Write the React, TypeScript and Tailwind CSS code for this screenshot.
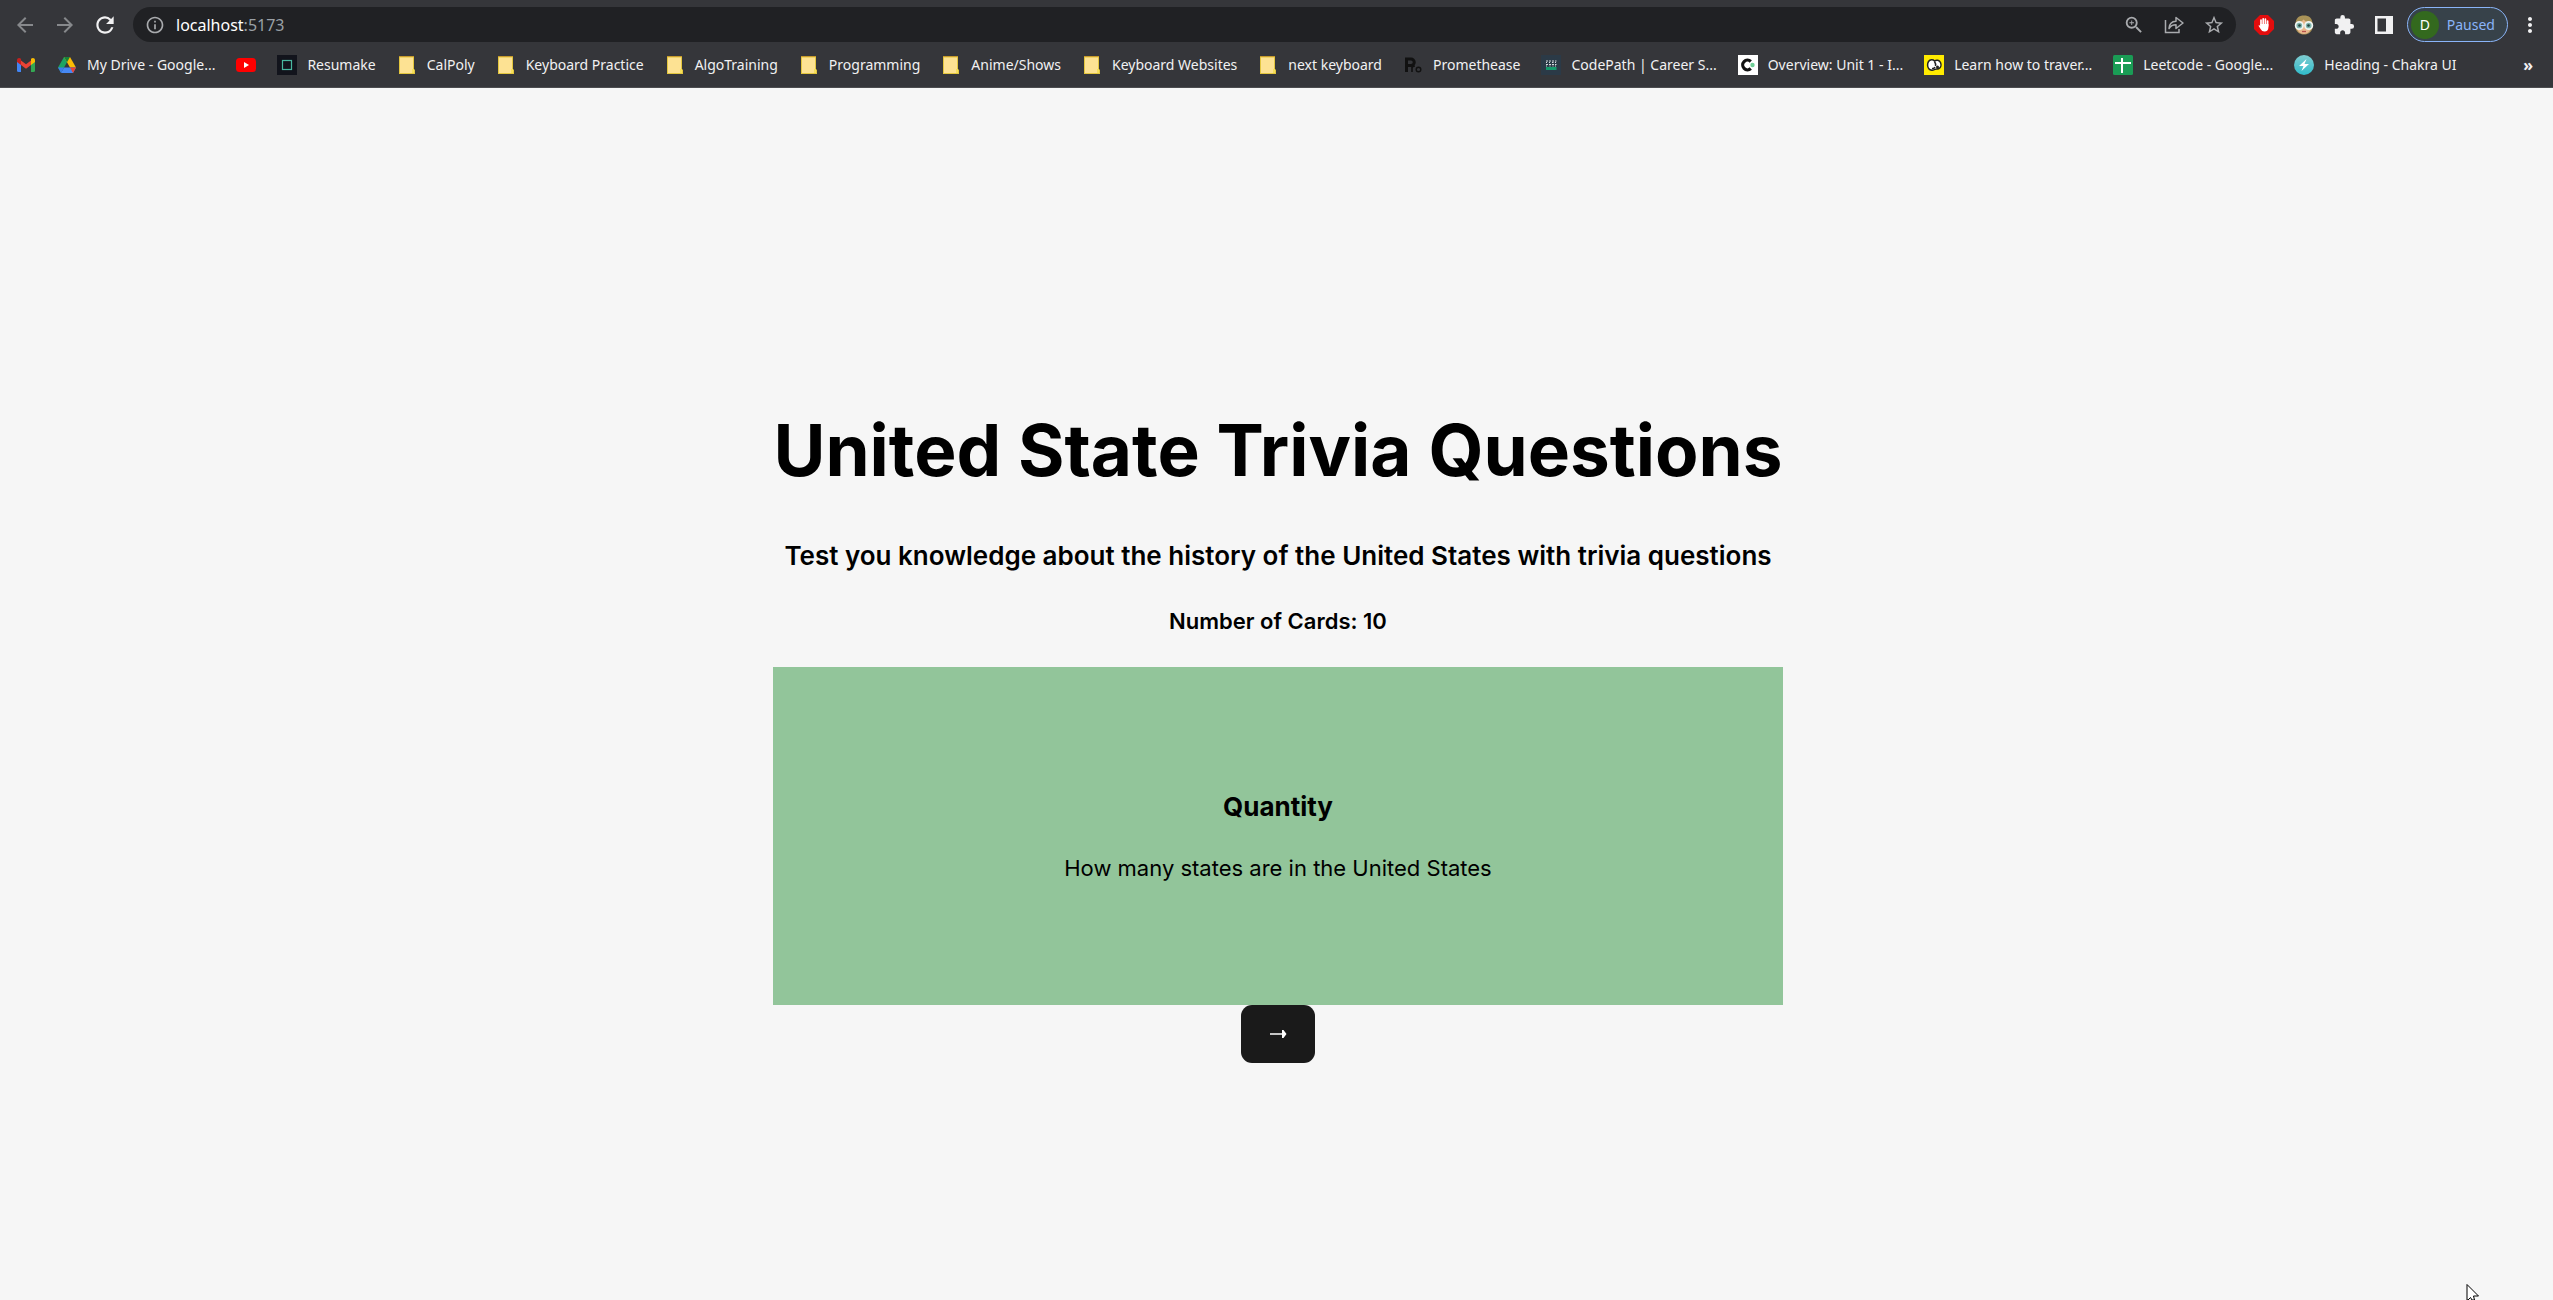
import React from 'react';
import {
  MdArrowBack,
  MdArrowForward,
  MdExtension,
  MdMoreVert,
  MdOutlineInfo,
  MdRefresh,
  MdStarBorder,
  MdZoomIn,
} from 'react-icons/md';

function GmailIcon() {
  return (
    <svg viewBox="0 0 20 20" className="size-5">
      <path d="M1 5v10.500a1.500 1.500 0 0 0 1.500 1.500H5V8z" fill="#4285f4" />
      <path d="M19 5v10.500a1.500 1.500 0 0 1-1.500 1.500H15V8z" fill="#34a853" />
      <path d="M5 5.500l5 3.800 5-3.800V10l-5 3.800L5 10z" fill="#ea4335" />
      <path d="M1 5.200C1 3.200 3.200 2.500 4.600 3.600L5 4v6L1 7z" fill="#c5221f" />
      <path d="M19 5.200c0-2-2.200-2.700-3.600-1.600L15 4v6l4-3z" fill="#fbbc04" />
    </svg>
  );
}

function DriveIcon() {
  return (
    <svg viewBox="0 0 20 20" className="size-5">
      <path d="M7 2h6L7 12.500 4 17.500 1 12.500z" fill="#1da462" />
      <path d="M7 2h6l6 10.500h-6z" fill="#fbbc04" />
      <path d="M7 2h6l-3 5.200z" fill="#188038" />
      <path d="M7 12.500h12l-3 5.500H4z" fill="#4688f4" />
      <path d="M13 12.500h6l-3 5.500z" fill="#ea4335" />
      <path d="M1 12.500h6L4 18z" fill="#3b7ded" />
    </svg>
  );
}

function YouTubeIcon() {
  return (
    <svg viewBox="0 0 20 20" className="size-5">
      <rect x="0" y="3" width="20" height="14" rx="3.500" fill="#f00" />
      <path d="M8 7l5 3-5 3z" fill="#fff" />
    </svg>
  );
}

function ResumakeIcon() {
  return (
    <svg viewBox="0 0 20 20" className="size-5">
      <rect width="20" height="20" fill="#12141c" />
      <rect x="5.500" y="5.500" width="9" height="9" fill="none" stroke="#48b8a0" strokeWidth="1.200" />
    </svg>
  );
}

function FolderIcon() {
  return (
    <svg viewBox="0 0 20 20" className="size-5">
      <path d="M2 1.500h15v12.500l1 1v4H2z" fill="#e3c63e" />
      <path d="M3 2.500h13v15.500H3z" fill="#fde293" />
      <path d="M15 14h2v4h-2z" fill="#f6e05a" />
      <path d="M2 1h15v1H2z" fill="#c79a2c" />
    </svg>
  );
}

function PrometheaseIcon() {
  return (
    <svg viewBox="0 0 20 20" className="size-5" fill="none" stroke="#111">
      <path d="M3.500 17V4h4.500a3.200 3.200 0 0 1 0 6.500H3.500" strokeWidth="3" />
      <path d="M9 17v-6M9 13c.5-1.500 1.500-2 3-2" strokeWidth="1.600" />
      <circle cx="15.500" cy="14.500" r="2.300" strokeWidth="1.400" />
    </svg>
  );
}

function CodePathIcon() {
  return (
    <svg viewBox="0 0 20 20" className="size-5">
      <rect width="20" height="20" fill="#2b3a47" />
      <path d="M5 6h2M8 6h2M11 6h2M14 6h1.500M5 7.500h1M8 7.500h1M11 7.500h1.500M14 7.500h1M5 9.500h2M8 9.500h2M11 9.500h2M14 9.500h1.500M5 11h1M8.500 11h1M11.500 11h1M14 11h1" stroke="#d5dade" strokeWidth="1.100" />
      <path d="M5 13.500h10.500" stroke="#159a6c" strokeWidth="3" />
    </svg>
  );
}

function OverviewIcon() {
  return (
    <svg viewBox="0 0 20 20" className="size-5">
      <rect width="20" height="20" fill="#fff" />
      <path d="M12.800 6.500A4.800 4.800 0 1 0 12.800 13.500" fill="none" stroke="#111" strokeWidth="3.200" />
      <circle cx="14.500" cy="10" r="2.200" fill="#6fcf97" />
    </svg>
  );
}

function LearnIcon() {
  return (
    <svg viewBox="0 0 20 20" className="size-5">
      <rect width="20" height="20" fill="#ffeb00" />
      <path d="M4.500 6.500C6 4.500 9 4.300 10.500 6c2-1.600 5-.8 6 1.500s.4 5-1.500 6c-1.500.8-3 .3-4 .8-1.700 1.500-4.700 1.200-6.200-.6S3.200 8.500 4.500 6.500z" fill="#fff" stroke="#222" strokeWidth="1.500" />
      <path d="M10.500 6.500c1 1.500 1.500 2.500 1 4.500M8 13.500c1.500.3 2.500-.3 3-1.500" fill="none" stroke="#222" strokeWidth="1.500" />
      <circle cx="13.500" cy="12" r="1.500" fill="#222" />
    </svg>
  );
}

function SheetIcon() {
  return (
    <svg viewBox="0 0 20 20" className="size-5">
      <rect x="0" y="0" width="20" height="20" rx="1.500" fill="#1a9c55" />
      <path d="M9 3v15M2 8h16" stroke="#fff" strokeWidth="2" />
    </svg>
  );
}

function ChakraIcon() {
  return (
    <svg viewBox="0 0 20 20" className="size-5">
      <defs>
        <linearGradient id="chakra" x1="0" y1="0" x2="0" y2="1">
          <stop offset="0" stopColor="#7fccd0" />
          <stop offset="1" stopColor="#2fbccb" />
        </linearGradient>
      </defs>
      <circle cx="10" cy="10" r="10" fill="url(#chakra)" />
      <path d="M12.500 4L5 11h4.500L7.500 16 15 9h-4.500z" fill="#fff" />
    </svg>
  );
}

function ShareIcon() {
  return (
    <svg viewBox="0 0 20 20" className="size-5" fill="none" stroke="#a9abae" strokeWidth="1.500">
      <path d="M1.500 5v12.500h13.500V14" />
      <path d="M5 13.500c.3-5 2.800-7 7-7.200V2.500l7 5.500-7 5.500v-3.700c-3 0-5.300.9-7 3.700z" strokeLinejoin="round" />
    </svg>
  );
}

function BlockerIcon() {
  return (
    <svg viewBox="0 0 20 20" className="size-5">
      <path d="M6 0h8l6 6v8l-6 6H6l-6-6V6z" fill="#e40d0d" />
      <path d="M7 10V5M9.200 9V3.800M11.400 9V4.200M13.600 11V6" stroke="#fff" strokeWidth="1.700" strokeLinecap="round" />
      <path d="M6.200 9h8.200v3.500c0 2.500-1.500 4-3.800 4-2 0-3-.8-4-2.500L4.500 10.800c.6-.8 1.200-.6 1.700 0z" fill="#fff" />
    </svg>
  );
}

function FaceIcon() {
  return (
    <svg viewBox="0 0 20 20" className="size-5">
      <path d="M1.500 9C1.500 3 5 .5 10 .5S18.500 3 18.500 9v4c-1 4-4 6.500-8.500 6.500S2.500 17 1.500 13z" fill="#a89257" />
      <path d="M3 8c3-.3 5-1.500 6.500-3.500C11 6.500 14 7.700 17 8v4c0 4-3 7-7 7s-7-3-7-7z" fill="#e9b98e" />
      <circle cx="5.300" cy="10.500" r="3.700" fill="#7fb5ad" stroke="#f1f5f3" strokeWidth="1.700" />
      <circle cx="14.700" cy="10.500" r="3.700" fill="#7fb5ad" stroke="#f1f5f3" strokeWidth="1.700" />
      <circle cx="5.500" cy="10.500" r="1.300" fill="#27413e" />
      <circle cx="14.500" cy="10.500" r="1.300" fill="#27413e" />
      <path d="M8 16.500h4" stroke="#b7504b" strokeWidth="1.300" />
    </svg>
  );
}

function SidePanelIcon() {
  return (
    <svg viewBox="0 0 20 20" className="size-5">
      <path fillRule="evenodd" d="M1 1h18v18H1zM3.500 3.500v13h8.500v-13z" fill="#f1f1f2" />
    </svg>
  );
}

type Bookmark = { name: string; label?: string; icon: () => React.JSX.Element };

const bookmarks: Bookmark[] = [
  { name: 'Gmail', icon: GmailIcon },
  { name: 'My Drive', label: 'My Drive - Google...', icon: DriveIcon },
  { name: 'YouTube', icon: YouTubeIcon },
  { name: 'Resumake', label: 'Resumake', icon: ResumakeIcon },
  { name: 'CalPoly', label: 'CalPoly', icon: FolderIcon },
  { name: 'Keyboard Practice', label: 'Keyboard Practice', icon: FolderIcon },
  { name: 'AlgoTraining', label: 'AlgoTraining', icon: FolderIcon },
  { name: 'Programming', label: 'Programming', icon: FolderIcon },
  { name: 'Anime/Shows', label: 'Anime/Shows', icon: FolderIcon },
  { name: 'Keyboard Websites', label: 'Keyboard Websites', icon: FolderIcon },
  { name: 'next keyboard', label: 'next keyboard', icon: FolderIcon },
  { name: 'Promethease', label: 'Promethease', icon: PrometheaseIcon },
  { name: 'CodePath', label: 'CodePath | Career S...', icon: CodePathIcon },
  { name: 'Overview', label: 'Overview: Unit 1 - I...', icon: OverviewIcon },
  { name: 'Learn', label: 'Learn how to traver...', icon: LearnIcon },
  { name: 'Leetcode', label: 'Leetcode - Google...', icon: SheetIcon },
  { name: 'Chakra UI', label: 'Heading - Chakra UI', icon: ChakraIcon },
];

function ToolButton({ label, children }: { label: string; children: React.ReactNode }) {
  return (
    <button aria-label={label} className="flex w-10 items-center justify-center">
      {children}
    </button>
  );
}

function AddressBar() {
  return (
    <div className="flex h-[35px] items-center pl-[5px] pr-[11px]">
      <div className="flex shrink-0 items-center text-[24px] text-[#87898c]">
        <ToolButton label="Back"><MdArrowBack /></ToolButton>
        <ToolButton label="Forward"><MdArrowForward /></ToolButton>
        <ToolButton label="Reload"><MdRefresh className="text-[26px] text-[#f1f1f2]" /></ToolButton>
      </div>
      <div className="ml-2 flex h-[35px] flex-1 items-center rounded-full bg-[#202124] pl-3 pr-[2px] text-[#a9abae]">
        <button aria-label="Site information" className="text-[20px]"><MdOutlineInfo /></button>
        <label className="relative ml-[11px] flex h-full flex-1 items-center text-base">
          <span className="pointer-events-none absolute left-0 text-white">
            localhost<span className="text-[#9aa0a6]">:5173</span>
          </span>
          <input aria-label="Address" defaultValue="localhost:5173" className="w-full bg-transparent text-transparent outline-none" />
        </label>
        <div className="flex items-center text-[22px]">
          <ToolButton label="Zoom"><MdZoomIn /></ToolButton>
          <ToolButton label="Share"><ShareIcon /></ToolButton>
          <ToolButton label="Bookmark this page"><MdStarBorder /></ToolButton>
        </div>
      </div>
      <div className="ml-2 flex items-center text-[22px] text-[#f1f1f2]">
        <ToolButton label="Ad blocker"><BlockerIcon /></ToolButton>
        <ToolButton label="Glasses extension"><FaceIcon /></ToolButton>
        <ToolButton label="Extensions"><MdExtension /></ToolButton>
        <ToolButton label="Side panel"><SidePanelIcon /></ToolButton>
      </div>
      <button className="ml-[3px] flex h-[35px] items-center gap-2 rounded-full border border-[#8ab4f8] bg-[#37424a] pl-[3px] pr-3 text-sm text-[#8ab4f8]">
        <span className="flex size-7 items-center justify-center rounded-full bg-[#33691e] text-white">D</span>
        Paused
      </button>
      <button aria-label="Menu" className="ml-[10px] text-[24px] text-[#f1f1f2]"><MdMoreVert /></button>
    </div>
  );
}

function BookmarksBar() {
  return (
    <nav aria-label="Bookmarks" className="flex h-[45px] items-center justify-between pl-4 pr-5 text-sm text-[#f1f1f2]">
      <ul className="flex items-center gap-[21px]">
        {bookmarks.map(({ name, label, icon: Icon }) => (
          <li key={name}>
            <a href="#" aria-label={label ?? name} className="flex items-center gap-[10px] whitespace-nowrap">
              <Icon />
              {label}
            </a>
          </li>
        ))}
      </ul>
      <button aria-label="More bookmarks" className="text-base font-bold">»</button>
    </nav>
  );
}

export default function App() {
  return (
    <div className="relative flex min-h-screen flex-col overflow-hidden bg-[#f6f6f6]">
      <header className="border-b border-[#4c4d50] bg-[#35363a] pt-[7px] font-['Noto_Sans',sans-serif]">
        <AddressBar />
        <BookmarksBar />
      </header>
      <main className="flex flex-1 flex-col items-center justify-center pt-[87px] pl-[3px] font-['Inter',sans-serif] text-black">
        <div className="flex flex-col items-center">
          <h1 className="text-[71px] leading-[77px] font-bold">United State Trivia Questions</h1>
          <h2 className="mt-[47px] text-[26px] leading-[39px] font-semibold">
            Test you knowledge about the history of the United States with trivia questions
          </h2>
          <h3 className="mt-[30px] text-[22px] leading-[33px] font-semibold">Number of Cards: 10</h3>
          <section className="mt-[29px] flex flex-col items-center gap-[26px] self-stretch bg-[#92c59a] py-[120px]">
            <h3 className="text-[26px] leading-[39px] font-bold">Quantity</h3>
            <p className="text-[22px] leading-[33px] font-normal">How many states are in the United States</p>
          </section>
          <button aria-label="Next card" className="flex h-[58px] w-[74px] items-center justify-center rounded-[11px] bg-[#1a1a1a] text-white">
            <svg viewBox="0 0 18 10" className="h-[10px] w-[18px]" fill="currentColor">
              <path d="M1 4.200h12V1h1.500l3 4-3 4H13V5.800H1z" />
            </svg>
          </button>
        </div>
      </main>
      <svg viewBox="0 0 14 16" className="absolute right-[73px] bottom-0 h-4 w-[14px]">
        <path d="M1 0.500V16h1l2.500-2.500L6 16h2.500L7.500 12H12.500z" fill="#fff" stroke="#000" />
      </svg>
    </div>
  );
}
